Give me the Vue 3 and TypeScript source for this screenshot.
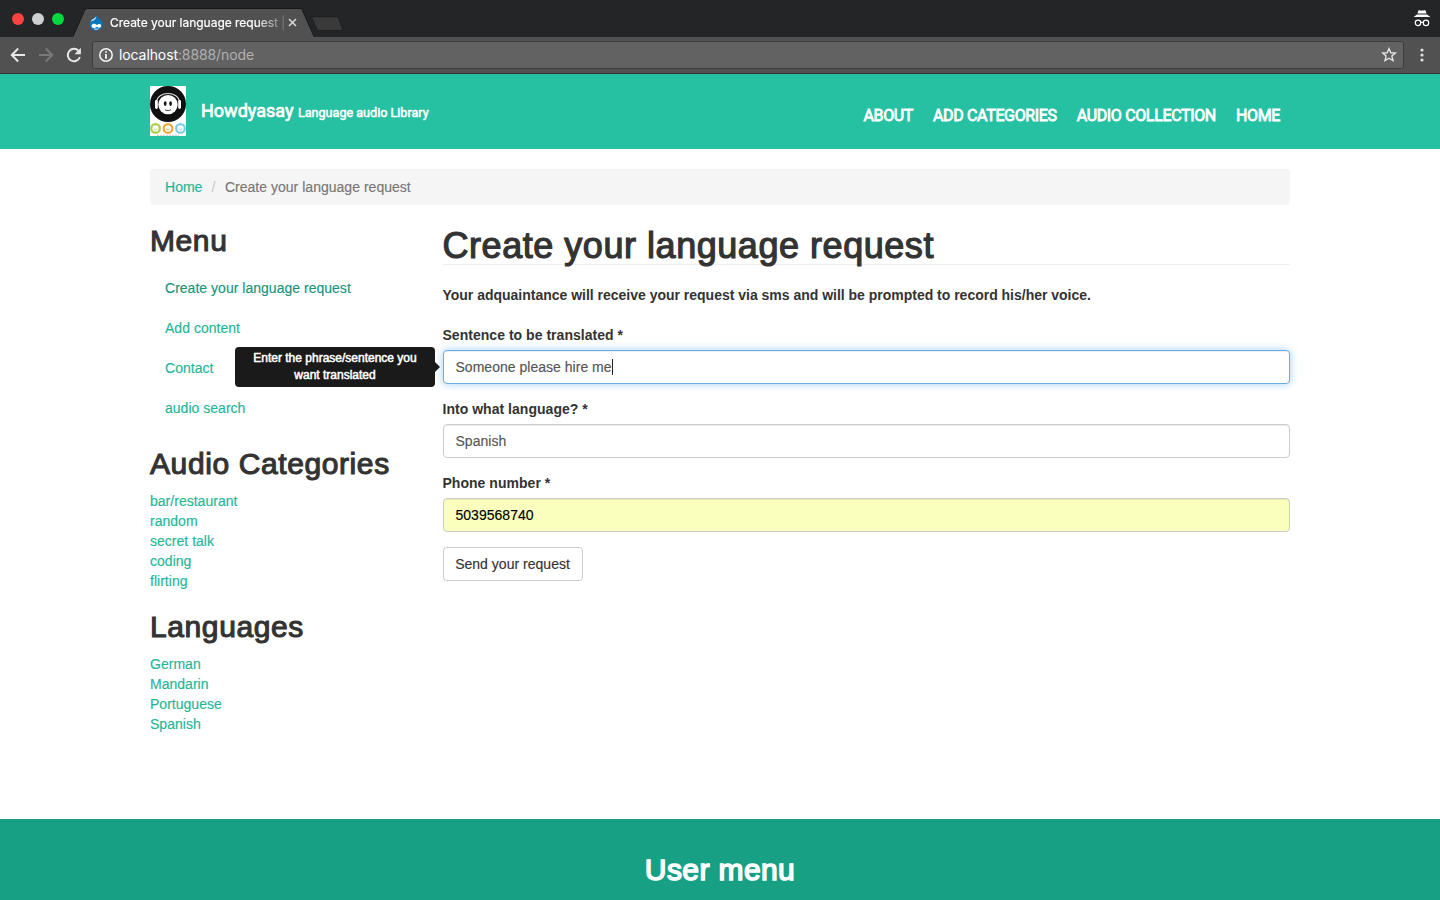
<script setup lang="ts">
import { ref } from 'vue'

interface Field {
  id: string
  label: string
  value: string
  state: string
  tip?: string
}

const title = 'Create your language request'
const navLinks = ['ABOUT', 'ADD CATEGORIES', 'AUDIO COLLECTION', 'HOME']
const menu = [title, 'Add content', 'Contact', 'audio search']
const categories = ['bar/restaurant', 'random', 'secret talk', 'coding', 'flirting']
const languages = ['German', 'Mandarin', 'Portuguese', 'Spanish']
const fields = ref<Field[]>([
  {
    id: 'sentence',
    label: 'Sentence to be translated *',
    value: 'Someone please hire me',
    state: 'focused',
    tip: 'Enter the phrase/sentence you want translated',
  },
  { id: 'language', label: 'Into what language? *', value: 'Spanish', state: '' },
  { id: 'phone', label: 'Phone number *', value: '5039568740', state: 'autofill' },
])
</script>

<template>
  <div class="window">
    <div class="tabstrip">
      <div class="lights">
        <i class="red"></i><i class="grey"></i><i class="green"></i>
      </div>
      <div class="tab">
        <svg class="tab-shape" width="244" height="29" viewBox="0 0 244 29">
          <path d="M0 29 L11.5 2.5 Q12.4 .5 14.5 .5 H226.500 Q228.700 .5 229.500 2.500 L241 28 V29Z" fill="#515151" />
          <path d="M0 28.500 L11.500 2.500 Q12.400 .5 14.500 .5 H226.500 Q228.700 .5 229.500 2.500 L241 28.500" fill="none" stroke="#171719" />
        </svg>
        <svg class="favicon" width="14" height="16" viewBox="0 0 14 16">
          <path d="M7.400.4C8 2.500 9.800 3.100 11 4.300c1.500 1.300 2.500 2.900 2.500 5C13.500 13 10.600 15.500 7 15.500S.5 13 .5 9.300C.5 7.200 1.700 5.400 3.200 4.300 4.700 3.300 7 2.500 7.400.4Z" fill="#0a77bd" />
          <path d="M2.400 5.200C4 3.600 6.300 3 7.200 1.200 7.400 4 4.800 5.800 1.800 6.400Z" fill="#b9dff4" />
          <path d="M2.600 10.300c1.600-2.500 3.800-1.500 5.200-.2 1.400-1.200 3.800-2 4.300.5.500 2.400-2.300 2.600-4.200 1.100-1.700 1.600-6.100 2.300-5.300-1.400Z" fill="#fff" />
          <path d="M5 13.700c1.200.8 3.500.8 4.600-.1" fill="none" stroke="#fff" stroke-width=".9" />
        </svg>
        <span class="tab-title">Create your language request |</span>
        <svg class="tab-close" width="9" height="9" viewBox="0 0 9 9">
          <path d="M1 1 8 8M8 1 1 8" stroke="#d6d6d6" stroke-width="1.600" />
        </svg>
      </div>
      <svg class="newtab" width="34" height="16" viewBox="0 0 34 16">
        <path d="M1.500 .8H26.500Q28 .8 28.600 2L33 14.500H8.500Q7.200 14.500 6.600 13Z" fill="#3a3a3b" stroke="#1f1f21" />
      </svg>
      <svg class="incognito" width="18" height="17" viewBox="0 0 18 17">
        <path d="M5.400 .4C6.700-.2 7.500 1 9 .6S11.300-.1 12.600 .4L13.500 3.600H4.500ZM4 4.600H14L17.400 7.100H.6Z" fill="#fff" />
        <circle cx="5" cy="12.900" r="2.700" fill="none" stroke="#fff" stroke-width="1.200" />
        <circle cx="13" cy="12.900" r="2.700" fill="none" stroke="#fff" stroke-width="1.200" />
        <path d="M7.700 12.600Q9 11.700 10.300 12.600" fill="none" stroke="#fff" stroke-width="1.100" />
      </svg>
    </div>

    <div class="toolbar">
      <svg class="back" width="16" height="16" viewBox="0 0 16 16">
        <path d="M15 8H2M8.200 1.500 1.700 8l6.500 6.500" fill="none" stroke="#e8e8e8" stroke-width="1.900" />
      </svg>
      <svg class="forward" width="16" height="16" viewBox="0 0 16 16">
        <path d="M1 8H14M7.800 1.500 14.300 8l-6.500 6.500" fill="none" stroke="#7a7a7a" stroke-width="1.900" />
      </svg>
      <svg class="reload" width="16" height="16" viewBox="0 0 16 16">
        <path d="M13.900 10A6.200 6.200 0 1 1 12.400 3.600" fill="none" stroke="#e8e8e8" stroke-width="1.900" />
        <path d="M14.900 .8V7.200H8.500Z" fill="#e8e8e8" />
      </svg>
      <div class="omnibox">
        <svg class="info" width="14" height="14" viewBox="0 0 14 14">
          <circle cx="7" cy="7" r="6.200" fill="none" stroke="#f5f5f5" stroke-width="1.500" />
          <path d="M7 6V10.800M7 3.200V4.800" stroke="#f5f5f5" stroke-width="1.800" />
        </svg>
        <span class="url"><b>localhost</b>:8888/node</span>
        <svg class="star" width="16" height="15" viewBox="0 0 16 15">
          <path d="M8 1.600 9.800 5.800 14.300 6.100 10.900 9.100 12 13.500 8 11.200 4 13.500 5.100 9.100 1.700 6.100 6.200 5.800Z" fill="none" stroke="#e4e4e4" stroke-width="1.400" />
        </svg>
      </div>
      <svg class="dots" width="4" height="14" viewBox="0 0 4 14">
        <circle cx="2" cy="2" r="1.600" fill="#dedede" />
        <circle cx="2" cy="7" r="1.600" fill="#dedede" />
        <circle cx="2" cy="12" r="1.600" fill="#dedede" />
      </svg>
    </div>

    <header class="navbar">
      <div class="container nav-row">
        <svg class="logo" width="36" height="50" viewBox="0 0 36 50">
          <rect width="36" height="50" fill="#fff" />
          <circle cx="18" cy="18" r="18" fill="#101010" />
          <path d="M6.500 16.500C7 4.500 29 4.500 29.500 16.500" fill="none" stroke="#ddd" stroke-width="1.100" />
          <circle cx="18" cy="18.600" r="9.700" fill="#fff" />
          <rect x="5" y="14" width="2.800" height="9" rx="1.400" fill="#fff" />
          <rect x="28.200" y="14" width="2.800" height="9" rx="1.400" fill="#fff" />
          <ellipse cx="15.200" cy="17.600" rx="1.400" ry="2.300" fill="#181818" />
          <ellipse cx="20.600" cy="17.600" rx="1.400" ry="2.300" fill="#181818" />
          <path d="M15 23.600Q18 25.500 21 23.600" fill="none" stroke="#333" stroke-width="1.100" />
          <g fill="#fff" stroke-width="2.200">
            <circle cx="5.500" cy="42.400" r="4.300" stroke="#a9cf47" />
            <circle cx="18" cy="42.400" r="4.300" stroke="#f3a536" />
            <circle cx="30.500" cy="42.400" r="4.300" stroke="#7dcbe9" />
          </g>
          <g fill="none" stroke-width=".9">
            <path d="M3.600 42.800q1.900 1.900 3.800 0" stroke="#a9cf47" />
            <path d="M16.100 42.800q1.900 1.900 3.800 0" stroke="#f3a536" />
            <path d="M28.600 42.800q1.900 1.900 3.800 0" stroke="#7dcbe9" />
          </g>
          <path d="M7 49.300H29" stroke="#aaa" stroke-width=".7" stroke-dasharray="2 1" />
        </svg>
        <div class="brand"><span>Howdyasay</span><small>Language audio Library</small></div>
        <nav class="nav">
          <a v-for="l in navLinks" :key="l">{{ l }}</a>
        </nav>
      </div>
    </header>

    <div class="container page">
      <ol class="breadcrumb">
        <li><a>Home</a></li>
        <li class="sep">/</li>
        <li>{{ title }}</li>
      </ol>
      <div class="columns">
        <aside class="sidebar">
          <section>
            <h2>Menu</h2>
            <ul class="menu">
              <li v-for="(m, i) in menu" :key="m" :class="{ active: i === 0 }">{{ m }}</li>
            </ul>
          </section>
          <section>
            <h2>Audio Categories</h2>
            <ul><li v-for="c in categories" :key="c">{{ c }}</li></ul>
          </section>
          <section>
            <h2>Languages</h2>
            <ul><li v-for="l in languages" :key="l">{{ l }}</li></ul>
          </section>
        </aside>
        <main class="main">
          <h1>{{ title }}</h1>
          <p class="intro">Your adquaintance will receive your request via sms and will be prompted to record his/her voice.</p>
          <div v-for="f in fields" :key="f.id" class="group">
            <label>{{ f.label }}</label>
            <div class="control" :class="f.state">
              <span>{{ f.value }}</span>
              <i v-if="f.state === 'focused'" class="caret"></i>
              <div v-if="f.tip" class="tooltip">{{ f.tip }}</div>
            </div>
          </div>
          <button type="button">Send your request</button>
        </main>
      </div>
    </div>

    <footer class="footer"><h2>User menu</h2></footer>
  </div>
</template>

<style>
html, body { margin: 0; overflow: hidden; background: #fff; }
</style>

<style scoped>
* { box-sizing: border-box; }
.window {
  width: 1440px; height: 900px; overflow: hidden;
  display: flex; flex-direction: column;
  font: 14px/20px "Liberation Sans", Arial, sans-serif; color: #333;
}
ul, ol { list-style: none; margin: 0; padding: 0; }
svg { display: block; flex: none; }

.tabstrip { height: 37px; flex: none; background: #242527; display: flex; }
.lights { display: flex; gap: 8px; padding: 13px 0 0 12px; width: 73px; }
.lights i { width: 12px; height: 12px; border-radius: 50%; }
.red { background: #fc4340; }
.grey { background: #d0d0d0; }
.green { background: #03d840; }
.tab { position: relative; width: 241px; height: 29px; margin-top: 8px; display: flex; padding-left: 16px; }
.tab-shape { position: absolute; left: 0; top: 0; }
.favicon { position: relative; margin-top: 7px; }
.tab-title {
  position: relative; margin: 5px 0 0 7px; width: 176px; white-space: nowrap; overflow: hidden;
  font: 12px/20px Inter, sans-serif; letter-spacing: -.02px; color: #fff; -webkit-text-stroke: .2px #fff;
  -webkit-mask-image: linear-gradient(to right, #000 145px, rgba(0, 0, 0, .2) 172px);
  mask-image: linear-gradient(to right, #000 145px, rgba(0, 0, 0, .2) 172px);
}
.tab-close { position: relative; margin: 10px 0 0 2px; }
.newtab { margin: 16px 0 0 -4px; }
.incognito { margin: 10px 9px 0 auto; }

.toolbar {
  height: 37px; flex: none; background: #515151; border-bottom: 1px solid #3a3434;
  display: flex; align-items: center; padding: 0 16px 1px 10px;
}
.forward { margin-left: 12px; }
.reload { margin-left: 12px; }
.omnibox {
  margin-left: 10px; width: 1312px; height: 28px; border: 1px solid #3c3c3c; border-radius: 3px;
  background: #626262; display: flex; align-items: center; padding: 0 6px;
}
.url { margin-left: 6px; font: 14px/20px Inter, sans-serif; letter-spacing: -.1px; color: #b0b0b0; }
.url b { font-weight: 400; color: #fff; }
.star { margin-left: auto; }
.dots { margin-left: auto; }

.navbar { height: 75px; flex: none; background: #26c0a2; }
.container { width: 1140px; margin: 0 auto; }
.nav-row { display: flex; height: 75px; }
.logo { margin-top: 12px; }
.brand { margin: 27px 0 0 15px; font: 18px/20px Roboto, sans-serif; color: #fff; -webkit-text-stroke: .7px #fff; white-space: nowrap; }
.brand small { font-size: 12.6px; margin-left: 4.500px; -webkit-text-stroke-width: .5px; }
.nav { margin: 32px 10px 0 auto; display: flex; gap: 20px; font: 16px/20px Roboto, sans-serif; letter-spacing: -.35px; color: #fff; -webkit-text-stroke: .8px #fff; }

.page { padding-top: 20px; flex: none; height: 670px; }
.breadcrumb {
  height: 36px; background: #f5f5f5; border-radius: 4px; padding: 8px 15px; color: #777; display: flex;
}
.breadcrumb a { color: #1fb698; }
.breadcrumb .sep { color: #ccc; width: 22.5px; padding-left: 9px; }
.columns { display: flex; margin-top: 20px; }
.sidebar { width: 292.5px; flex: none; display: flex; flex-direction: column; gap: 20px; color: #1fb698; }
.sidebar li, .breadcrumb li, .control span, button { -webkit-text-stroke: .15px currentColor; letter-spacing: .02px; }
h2 { margin: 0 0 11px; font-size: 30px; line-height: 32px; font-weight: 400; letter-spacing: .6px; color: #333; -webkit-text-stroke: 1.1px currentColor; }
.menu li { height: 40px; padding: 10px 15px; }
.menu .active { color: #17957b; }
.main { flex: 1; }
h1 {
  margin: 0 0 20px; height: 40px; border-bottom: 1px solid #eee;
  font-size: 36px; line-height: 42px; font-weight: 400; letter-spacing: .54px; -webkit-text-stroke: 1.2px currentColor;
}
.intro { margin: 0 0 20px; font-weight: 700; letter-spacing: -.01px; }
.group { margin-bottom: 15px; }
label { display: block; font-weight: 700; margin-bottom: 5px; letter-spacing: .03px; }
.control {
  position: relative; height: 34px; border: 1px solid #ccc; border-radius: 4px; padding: 0 12px;
  display: flex; align-items: center; color: #555; background: #fff; box-shadow: inset 0 1px 1px rgba(0, 0, 0, .075);
}
.focused { border-color: #66afe9; box-shadow: inset 0 1px 1px rgba(0, 0, 0, .075), 0 0 8px rgba(102, 175, 233, .6); }
.autofill { background: #faffbd; color: #000; }
.caret { width: 1px; height: 16px; background: #222; }
.tooltip {
  position: absolute; right: 854px; top: -4px; width: 200px; height: 40px; padding: 3px 8px;
  background: #1a1a1a; border-radius: 4px; color: #fff; text-align: center; font-size: 12px; line-height: 17px;
  -webkit-text-stroke: .5px #fff;
}
.tooltip::after {
  content: ""; position: absolute; left: 100%; top: 15px;
  border: 5px solid transparent; border-left-color: #1a1a1a; border-right: 0;
}
button {
  display: block; width: 140px; height: 34px; padding: 0; border: 1px solid #ccc; border-radius: 4px; background: #fff;
  color: #333; font: inherit;
}
.footer { flex: 1; background: #18a085; text-align: center; padding-top: 35px; }
.footer h2 { color: #fff; letter-spacing: .4px; -webkit-text-stroke: 1.5px #fff; }
</style>
